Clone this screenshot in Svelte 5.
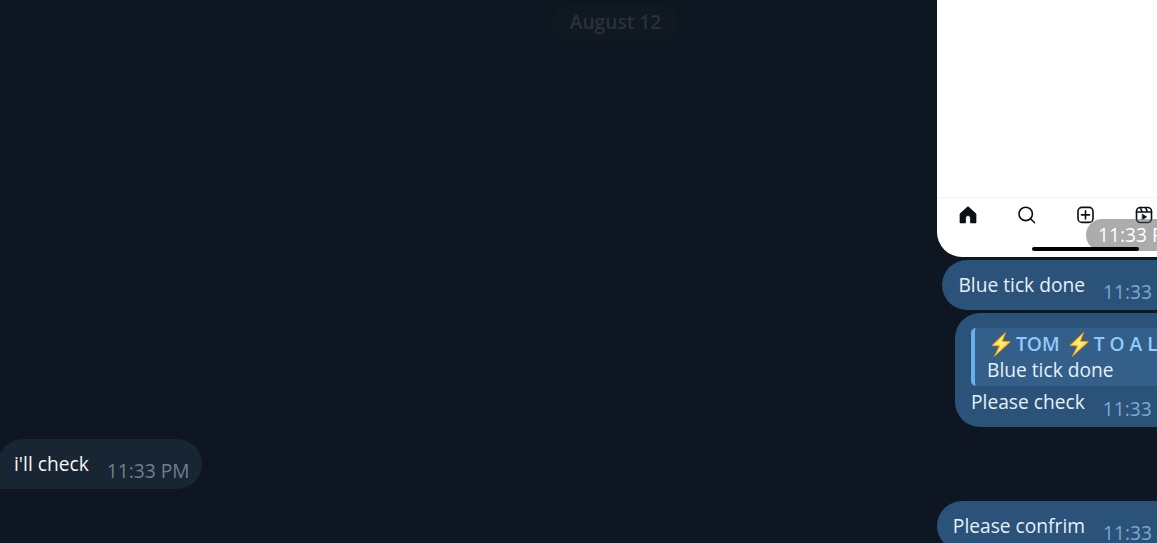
<script lang="ts">
	type Message = {
		id: number;
		text: string;
		time: string;
		own: boolean;
		quote?: { author: string[]; text: string };
	};

	const messages: Message[] = [
		{ id: 1, text: 'Blue tick done', time: '11:33 PM', own: true },
		{
			id: 2,
			text: 'Please check',
			time: '11:33 PM',
			own: true,
			quote: { author: ['TOM', 'T O A L'], text: 'Blue tick done' }
		},
		{ id: 3, text: "i'll check", time: '11:33 PM', own: false },
		{ id: 4, text: 'Please confrim', time: '11:33 PM', own: true }
	];
</script>

{#snippet bolt()}
	<svg class="bolt" viewBox="0 0 22 26" aria-hidden="true">
		<defs>
			<linearGradient id="bolt-fill" x1="0" y1="0" x2="1" y2="1">
				<stop offset="0.2" stop-color="#ffd93a" />
				<stop offset="0.5" stop-color="#fff07a" />
				<stop offset="0.85" stop-color="#ffb81c" />
			</linearGradient>
		</defs>
		<path
			d="M15.5 1.5 2 14.5l7.6.4L4.5 25.2l15.8-14.5-8-.5z"
			fill="url(#bolt-fill)"
			stroke="#f59a12"
			stroke-linejoin="round"
		/>
	</svg>
{/snippet}

<main>
	<div class="date">August 12</div>
	<div class="thread">
		<div class="photo">
			<nav>
				<svg viewBox="0 0 20 20">
					<path
						d="M10 1.6 2 8.8v9.1h5.6v-5a2.4 2.4 0 0 1 4.8 0v5H18V8.8z"
						fill="#0b1014"
						stroke="#0b1014"
						stroke-linejoin="round"
						stroke-width=".7"
					/>
				</svg>
				<svg class="line" viewBox="0 0 20 20">
					<circle cx="8.7" cy="8.9" r="6.7" />
					<path d="m13.5 13.7 4.1 4" />
				</svg>
				<svg class="line" viewBox="0 0 20 20">
					<rect x="2" y="2.4" width="15" height="15" rx="4" />
					<path d="M9.5 5.9v8M5.5 9.9h8" />
				</svg>
				<svg class="line" viewBox="0 0 20 20">
					<rect x="2.5" y="2.5" width="15" height="15" rx="3.8" />
					<path d="M2.5 7h15M6.3 2.7 8.2 7M11.5 2.7 13.5 7" />
					<path d="m8.5 9.3 4.2 2.6-4.2 2.6z" fill="#0b1014" stroke-width=".7" />
				</svg>
			</nav>
			<span class="photo-time">11:33 PM</span>
			<div class="home-bar"></div>
		</div>

		{#each messages as message (message.id)}
			<article class:own={message.own} class:quoted={message.quote}>
				{#if message.quote}
					<blockquote>
						<div class="author">
							{#each message.quote.author as part}
								{@render bolt()}<span>{part}</span>
							{/each}
						</div>
						<div>{message.quote.text}</div>
					</blockquote>
				{/if}
				<div class="row">
					<span>{message.text}</span>
					<time>{message.time}</time>
				</div>
			</article>
		{/each}
	</div>
</main>

<style>
	:global(body) {
		background: #0e1621;
	}

	main {
		position: relative;
		height: 543px;
		overflow: hidden;
		background: #0e1621;
		color: #e6f0f8;
		font: 19.2px/26px 'Open Sans', sans-serif;
		white-space: nowrap;
	}

	.date {
		position: absolute;
		top: 4px;
		left: 552px;
		box-sizing: border-box;
		width: 127px;
		height: 36px;
		border-radius: 18px;
		background: #101822;
		color: #29313c;
		font-weight: 600;
		line-height: 36px;
		text-align: center;
	}

	/* the thread runs on past the right edge of the window */
	.thread {
		display: flex;
		flex-direction: column;
		align-items: flex-end;
		gap: 3px;
		width: 1230px;
	}

	.photo {
		position: relative;
		display: flex;
		flex-direction: column;
		justify-content: flex-end;
		box-sizing: border-box;
		width: 293px;
		height: 257px;
		border-radius: 0 0 25px 25px;
		overflow: hidden;
		background: #fff;
	}

	nav {
		display: flex;
		gap: 38.8px;
		height: 52px;
		padding: 7px 0 0 21px;
		border-top: 1px solid #f3f3f3;
	}

	nav svg {
		flex: none;
		width: 20px;
		height: 20px;
	}

	.line {
		fill: none;
		stroke: #0b1014;
		stroke-width: 1.6;
		stroke-linecap: round;
		stroke-linejoin: round;
	}

	.home-bar {
		position: absolute;
		left: 95px;
		bottom: 6px;
		width: 107px;
		height: 4px;
		border-radius: 2px;
		background: #000;
	}

	.photo-time {
		position: absolute;
		top: 219px;
		left: 149px;
		width: 132px;
		height: 32px;
		padding-left: 12px;
		box-sizing: border-box;
		border-radius: 16px;
		background: rgba(90, 90, 90, 0.5);
		color: #fff;
		line-height: 32px;
	}

	article {
		box-sizing: border-box;
		height: 50px;
		padding: 12px 14px 0 16px;
		border-radius: 25px;
		background: #2b5278;
	}

	article:not(.own) {
		align-self: flex-start;
		margin: 9px 0 9px -2px;
		padding-right: 13px;
		border-bottom-left-radius: 0;
		background: #182533;
		color: #f5f5f5;
	}

	.quoted {
		height: 114px;
		padding-top: 15px;
	}

	.row {
		display: flex;
		gap: 18px;
	}

	time {
		margin-top: 7px;
		color: #6d7f8f;
	}

	.own time {
		width: 113px;
		color: #7da8d3;
	}

	blockquote {
		box-sizing: border-box;
		width: 245px;
		height: 58px;
		margin: 0 0 3px;
		padding: 3px 0 0 12px;
		border-left: 4px solid #65b0ed;
		border-radius: 5px;
		background: #335f88;
	}

	.author {
		display: flex;
		color: #90caff;
		font-weight: 600;
	}

	.author span {
		margin-right: 5px;
	}

	.bolt {
		flex: none;
		width: 22px;
		height: 26px;
		margin: 0 4px 0 3px;
	}
</style>
